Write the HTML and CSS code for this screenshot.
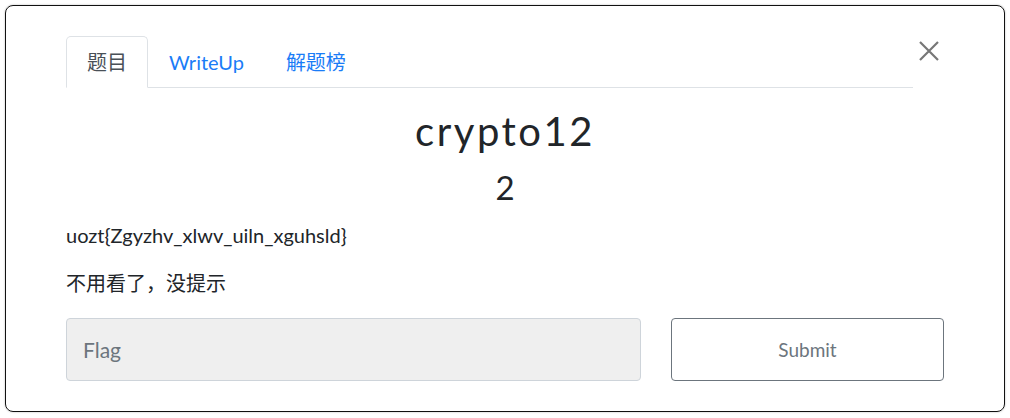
FILE: index.html
```html
<!DOCTYPE html>
<html lang="zh">
<head>
<meta charset="utf-8">
<title>crypto12</title>
<link rel="stylesheet" href="styles.css">
</head>
<body>
<div class="modal">
  <div class="header">
    <ul class="tabs">
      <li class="tab active">题目</li>
      <li class="tab">WriteUp</li>
      <li class="tab">解题榜</li>
    </ul>
    <button class="close" aria-label="Close">
      <svg width="20" height="20" viewBox="0 0 20 20"><path d="M1 1 L19 19 M19 1 L1 19" stroke="#777" stroke-width="2.2" fill="none"/></svg>
    </button>
  </div>
  <h2 class="title">crypto12</h2>
  <h3 class="value">2</h3>
  <p class="desc">uozt{Zgyzhv_xlwv_uiln_xguhsld}</p>
  <p class="desc cjk">不用看了，没提示</p>
  <div class="form">
    <input class="flag" type="text" placeholder="Flag">
    <button class="submit">Submit</button>
  </div>
</div>
</body>
</html>
```
FILE: styles.css
```css
html, body {
  margin: 0;
  padding: 0;
  background: #fff;
}
body {
  font-family: Lato, "Noto Sans CJK SC", sans-serif;
  color: #212529;
  padding: 5px;
}
.modal {
  width: 1000px;
  height: 407px;
  box-sizing: border-box;
  border: 1px solid #111;
  border-radius: 8px;
  padding: 30px 60px 30px 60px;
  box-shadow: 0 0 2px rgba(0,0,0,0.3);
}
.header {
  display: flex;
  align-items: flex-start;
}
.tabs {
  flex: 1;
  display: flex;
  list-style: none;
  margin: 0;
  padding: 0;
  border-bottom: 1px solid #dee2e6;
}
.tab {
  font-size: 20px;
  line-height: 26px;
  padding: 12px 20px 12px 20px;
  border: 1px solid transparent;
  border-radius: 5px 5px 0 0;
  margin-bottom: -1px;
  color: #1a7cf7;
}
.tab.active {
  color: #495057;
  border-color: #dee2e6 #dee2e6 #fff;
  background: #fff;
}
.close {
  width: 31px;
  border: 0;
  background: none;
  padding: 5px 0 0 1px;
  margin: 0;
  display: flex;
  justify-content: center;
}
.title {
  margin: 19px 0 0;
  font-size: 40px;
  line-height: 48px;
  font-weight: 400;
  letter-spacing: 2.5px;
  text-align: center;
}
.value {
  margin: 12px 0 0;
  font-size: 33px;
  line-height: 40px;
  font-weight: 400;
  text-align: center;
}
.desc {
  font-size: 20px;
  line-height: 30px;
  margin: 13px 0 0;
}
.desc.cjk {
  margin-top: 18px;
}
.form {
  display: grid;
  grid-template-columns: 575px 1fr;
  gap: 30px;
  margin-top: 20px;
}
.flag {
  height: 63px;
  box-sizing: border-box;
  border: 1px solid #ced4da;
  border-radius: 4px;
  background: #efefef;
  padding: 0 16px;
  font-family: Lato, sans-serif;
  font-size: 21px;
  color: #495057;
}
.flag::placeholder {
  color: #6c757d;
}
.submit {
  height: 63px;
  border: 1px solid #6c757d;
  border-radius: 4px;
  background: #fff;
  font-family: Lato, sans-serif;
  font-size: 19px;
  color: #6c757d;
}
```
